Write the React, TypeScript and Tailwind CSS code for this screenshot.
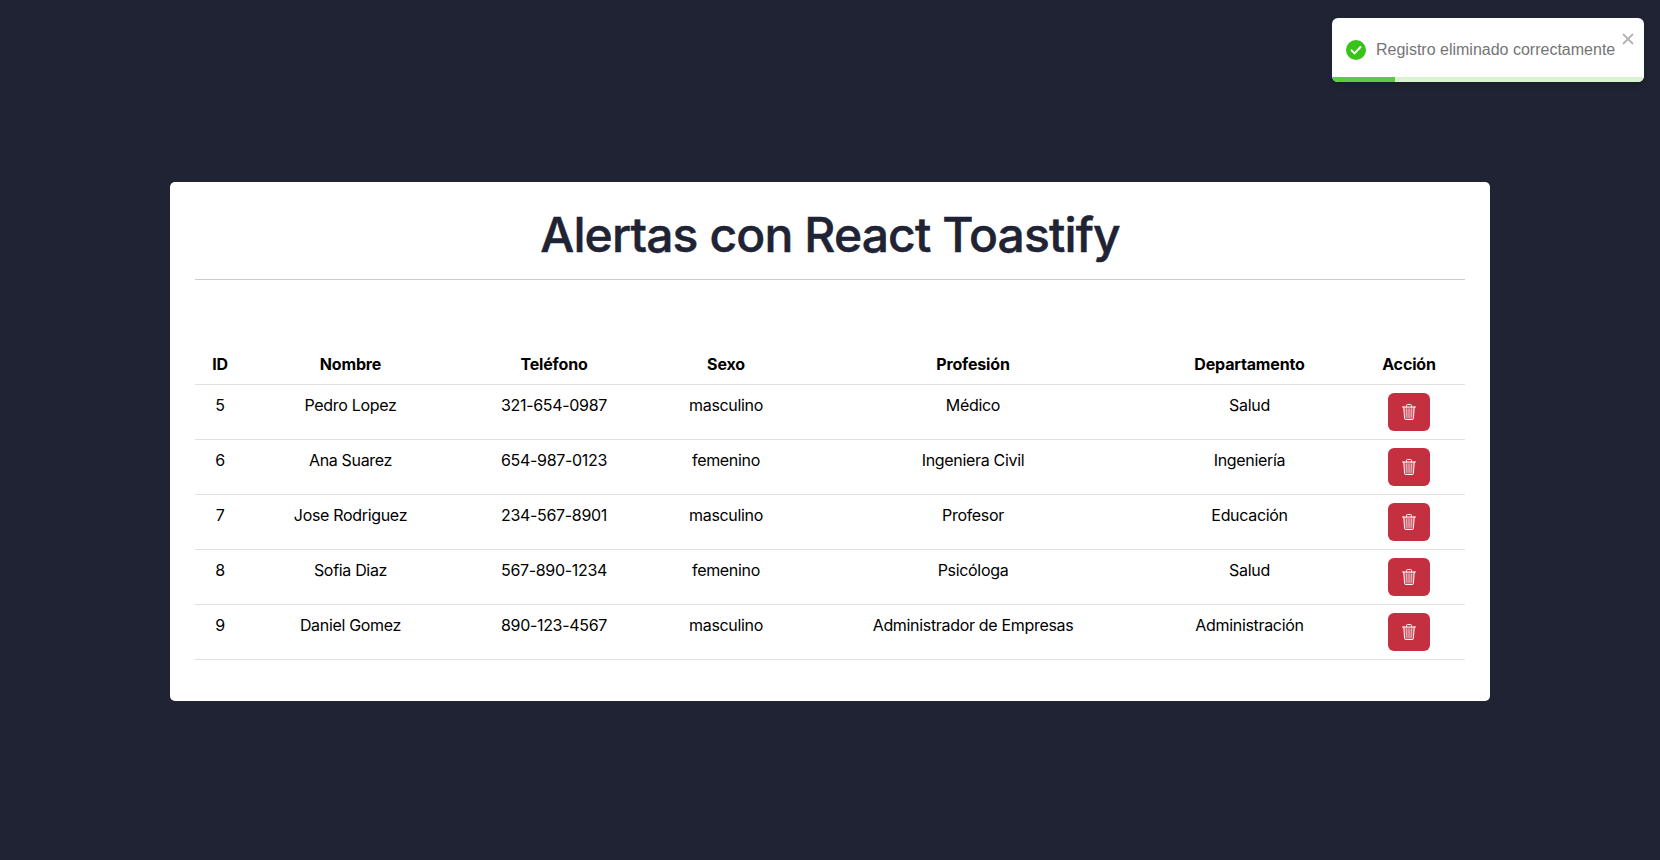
const rows = [
  ["5", "Pedro Lopez", "321-654-0987", "masculino", "Médico", "Salud"],
  ["6", "Ana Suarez", "654-987-0123", "femenino", "Ingeniera Civil", "Ingeniería"],
  ["7", "Jose Rodriguez", "234-567-8901", "masculino", "Profesor", "Educación"],
  ["8", "Sofia Diaz", "567-890-1234", "femenino", "Psicóloga", "Salud"],
  ["9", "Daniel Gomez", "890-123-4567", "masculino", "Administrador de Empresas", "Administración"],
];
const heads = ["ID", "Nombre", "Teléfono", "Sexo", "Profesión", "Departamento", "Acción"];

function TrashIcon() {
  return (
    <svg width="18" height="18" viewBox="0 0 18 18" fill="none" stroke="currentColor" strokeWidth="1" strokeLinecap="round" strokeLinejoin="round">
      <path d="M3.8 4l.8 11.6c0 .5.4.9.9.9h7c.5 0 .9-.4.9-.9L14.2 4z" fill="#ffffff" fillOpacity="0.22" stroke="none" />
      <path d="M2.5 4h13" />
      <path d="M6.5 4V2.4c0-.5.4-.9.9-.9h3.2c.5 0 .9.4.9.9V4" />
      <path d="M3.8 4l.8 11.6c0 .5.4.9.9.9h7c.5 0 .9-.4.9-.9L14.2 4" />
      <path d="M6.6 6l.3 8.4M9 6v8.4M11.4 6l-.3 8.4" strokeOpacity="0.6" />
    </svg>
  );
}

export default function App() {
  return (
    <div className="relative min-h-[860px] bg-[#202333] flex flex-col items-center pt-[182px] font-['Inter',sans-serif]">
      <div className="w-[1320px] h-[519px] bg-white rounded-[5px] px-[25px] pt-[17px]">
        <h1 className="text-[48px] leading-[72px] font-medium [-webkit-text-stroke:0.5px_#202333] tracking-[-0.87px] text-[#202333] text-center">Alertas con React Toastify</h1>
        <div className="h-px bg-[#cccccc] mt-[8px] border-b border-[#cccccc]"></div>
        <table className="w-full table-fixed mt-[64px] border-collapse text-black text-[16px] leading-6 text-center tracking-[-0.32px]">
          <colgroup>
            <col className="w-[50px]" />
            <col className="w-[211px]" />
            <col className="w-[196px]" />
            <col className="w-[148px]" />
            <col className="w-[346px]" />
            <col className="w-[207px]" />
            <col className="w-[112px]" />
          </colgroup>
          <thead>
            <tr className="border-b border-[#dee2e6]">
              {heads.map((h) => (
                <th key={h} className="p-2 font-bold tracking-[-0.15px]">{h}</th>
              ))}
            </tr>
          </thead>
          <tbody>
            {rows.map((r) => (
              <tr key={r[0]} className="border-b border-[#dee2e6]">
                {r.map((c, i) => (
                  <td key={i} className="p-2 align-top">{c}</td>
                ))}
                <td className="p-2 align-top">
                  <button className="inline-flex items-center justify-center w-[42px] h-[38px] rounded-md bg-[#c53040] text-white align-top">
                    <TrashIcon />
                  </button>
                </td>
              </tr>
            ))}
          </tbody>
        </table>
      </div>
      <div className="absolute top-[18px] left-[1332px] w-[312px] h-[64px] bg-white rounded-[6px] overflow-hidden shadow-md flex items-center pl-[14px] font-['Liberation_Sans',sans-serif] text-[16px] text-[#757575]">
        <svg width="20" height="20" viewBox="0 0 20 20" className="mr-[10px] shrink-0">
          <circle cx="10" cy="10" r="10" fill="#39c21a" />
          <path d="M5.5 10.4l3 3 6-6.4" fill="none" stroke="#fff" strokeWidth="2" strokeLinecap="round" strokeLinejoin="round" />
        </svg>
        <span className="whitespace-nowrap">Registro eliminado correctamente</span>
        <svg width="12" height="12" viewBox="0 0 12 12" className="absolute top-[15px] right-[10px]">
          <path d="M1.5 1.5l9 9M10.5 1.5l-9 9" stroke="#b3b3b3" strokeWidth="1.8" strokeLinecap="round" />
        </svg>
        <div className="absolute left-0 right-0 bottom-0 h-[5px] bg-[#d9f2cf]">
          <div className="h-full w-[63px] bg-[#5ccb3f]"></div>
        </div>
      </div>
    </div>
  );
}
